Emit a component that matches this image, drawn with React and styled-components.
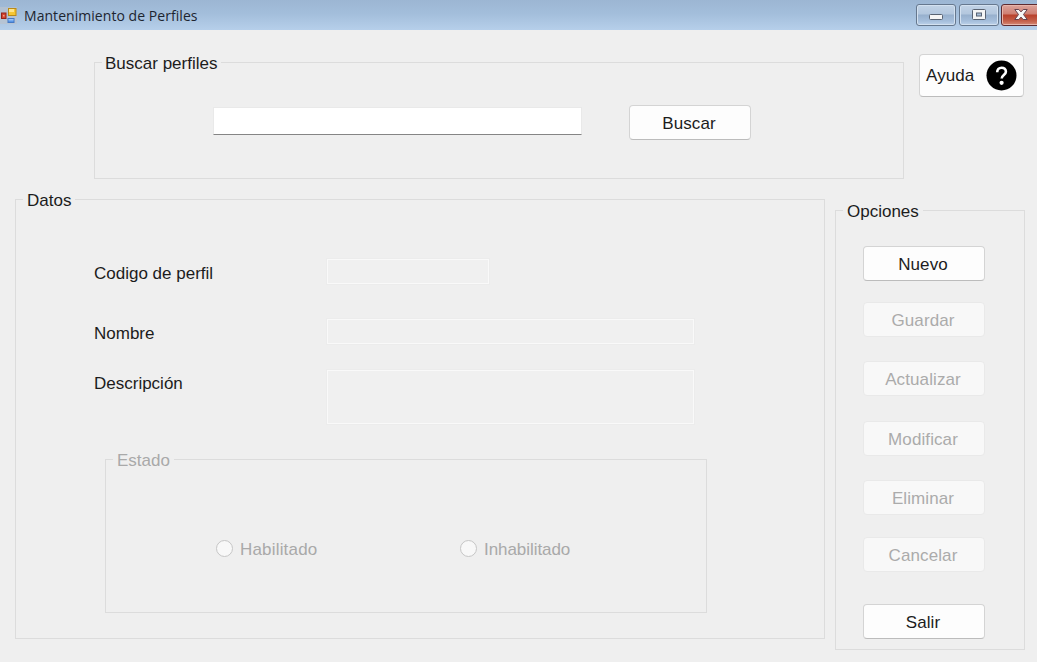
import React from "react";
import styled, { createGlobalStyle } from "styled-components";

const GlobalStyle = createGlobalStyle`
  body { margin: 0; background: #efefef; }
  * { box-sizing: border-box; }
`;

const Window = styled.main`
  width: 1037px;
  height: 662px;
  display: flex;
  flex-direction: column;
  overflow: hidden;
  background: #efefef;
  color: #1c1c1c;
  font: 17px/19px "Liberation Sans", Arial, sans-serif;
`;

const TitleBar = styled.header`
  flex: none;
  height: 30px;
  display: flex;
  align-items: flex-start;
  background: linear-gradient(#9cb6d3, #a3bedb 45%, #b6cfea);
`;

const AppIcon = styled.svg`
  display: block;
  flex: none;
  width: 17px;
  height: 17px;
  margin-top: 7px;
`;

const Title = styled.h1`
  flex: 1;
  margin: 6px 0 0 7px;
  color: #1d2530;
  font: 400 14px/20px "Open Sans", "Noto Sans", sans-serif;
  letter-spacing: 0.05px;
`;

const Controls = styled.div`
  display: flex;
  gap: 2px;
  padding-top: 4px;
  margin-right: -4px;
`;

const ControlButton = styled.button`
  width: 40px;
  height: 22px;
  padding: 0;
  display: flex;
  align-items: center;
  justify-content: center;
  border: 1px solid ${(p) => (p.$close ? "#5e2b30" : "#66788e")};
  border-radius: 3px;
  background: ${(p) =>
    p.$close
      ? "linear-gradient(#dca49b, #cf7f72 45%, #b8402b 50%, #c4604a 80%, #d58a76)"
      : "linear-gradient(#c2d3e6, #b3c7de 45%, #97b0cd 50%, #a5bedb 80%, #bdd2ea)"};
  box-shadow: inset 0 0 0 1px ${(p) => (p.$close ? "#e8b5aa" : "#d3e1f0")};

  &:first-child { margin-right: 1px; }
  svg { display: block; }
`;

const Content = styled.div`
  flex: 1;
  display: flex;
  flex-direction: column;
`;

const SearchRow = styled.div`
  display: flex;
  align-items: flex-start;
  padding: 23px 0 0 94px;
  gap: 15px;
`;

const MainRow = styled.div`
  display: flex;
  align-items: flex-start;
  padding: 11px 0 0 15px;
  gap: 10px;
`;

const Group = styled.fieldset`
  min-width: 0;
  width: ${(p) => p.$width}px;
  height: ${(p) => p.$height}px;
  margin: ${(p) => p.$margin || "0"};
  padding: 0;
  border: 1px solid #dcdcdc;
  color: ${(p) => (p.$muted ? "#a9a9a9" : "inherit")};
`;

const Legend = styled.legend`
  height: 19px;
  margin-left: 7px;
  padding: 0 4px 0 ${(p) => p.$inset || 4}px;
  line-height: 21px;
  white-space: nowrap;
`;

const SearchForm = styled.div`
  display: flex;
  align-items: flex-start;
  padding: 33px 0 0 118px;
  gap: 47px;
`;

const SearchInput = styled.input`
  width: 369px;
  height: 28px;
  margin-top: 2px;
  padding: 2px 6px;
  border: 1px solid #e9e9e9;
  border-bottom: 1px solid #858585;
  background: #fff;
  font: inherit;
  outline: none;
`;

const Button = styled.button`
  width: 122px;
  height: 35px;
  padding: 2px 2px 0 0;
  border: 1px solid #d4d4d4;
  border-bottom-color: #bcbcbc;
  border-radius: 4px;
  background: #fdfdfd;
  color: #1c1c1c;
  font: inherit;
  letter-spacing: 0.1px;

  &:disabled {
    border-color: #e9e9e9;
    background: #f8f8f8;
    color: #ababab;
  }
`;

const HelpButton = styled(Button)`
  width: 105px;
  height: 43px;
  margin-top: 1px;
  padding: 0 6px;
  display: flex;
  align-items: center;
  justify-content: space-between;
`;

const Fields = styled.div`
  display: grid;
  grid-template-columns: 233px 367px;
  grid-template-rows: 60px 51px 54px;
  padding: 50px 0 0 78px;
`;

const Label = styled.label`
  padding-top: ${(p) => (p.$tall ? 4 : 5)}px;
  color: #1c1c1c;
`;

const Field = styled.input`
  width: ${(p) => p.$width}px;
  height: ${(p) => p.$height}px;
  padding: 0;
  border: 1px solid #f9f9f9;
  background: #f0f0f0;
  box-shadow: 0 0 0 1px #ececec;
`;

const Radios = styled.div`
  display: flex;
  padding: 71px 0 0 110px;
`;

const Option = styled.label`
  display: flex;
  align-items: center;
  width: 244px;
  gap: 7px;
  letter-spacing: ${(p) => p.$tracking}px;
`;

const Circle = styled.span`
  width: 17px;
  height: 17px;
  margin-bottom: 2px;
  border: 1px solid #c6c6c6;
  border-radius: 50%;
  background: #f8f8f8;
`;

const Actions = styled.div`
  display: flex;
  flex-direction: column;
  padding: 26px 0 0 27px;
`;

const ActionButton = styled(Button)`
  margin-bottom: ${(p) => p.$after}px;
`;

const actions = [
  { label: "Nuevo", after: 21, enabled: true },
  { label: "Guardar", after: 24 },
  { label: "Actualizar", after: 25 },
  { label: "Modificar", after: 24 },
  { label: "Eliminar", after: 22 },
  { label: "Cancelar", after: 32 },
  { label: "Salir", after: 0, enabled: true },
];

function FormIcon() {
  return (
    <AppIcon viewBox="0 0 17 17">
      <rect width="17" height="17" fill="#b9c3cf" opacity=".75" />
      <rect x="8.500" y="1.500" width="7.500" height="7" fill="#f5c633" stroke="#b98a17" />
      <path d="M9 2h5v3H9z" fill="#ffe48a" />
      <rect x="1.500" y="6" width="4.500" height="5.500" fill="#d3452f" stroke="#96231a" />
      <path d="M3 8h1.500v1.500H3z" fill="#f2a08c" />
      <rect x="8" y="11.500" width="6" height="4" fill="#5a96e6" stroke="#4579c4" />
      <path d="M8.500 12h5v1.500h-5z" fill="#9cc4f7" />
    </AppIcon>
  );
}

function HelpIcon() {
  return (
    <svg width="31" height="31" viewBox="0 0 31 31">
      <circle cx="15.5" cy="15.5" r="15" fill="#000" />
      <path
        d="M11.2 12.3c0-2.900 1.800-4.600 4.400-4.600 2.500 0 4.300 1.600 4.300 4 0 3.200-4.200 3.400-4.200 6.700"
        fill="none"
        stroke="#fff"
        strokeWidth="2.6"
      />
      <circle cx="15.6" cy="22.8" r="2.1" fill="#fff" />
    </svg>
  );
}

export default function App() {
  return (
    <>
      <GlobalStyle />
      <Window>
        <TitleBar>
          <FormIcon />
          <Title>Mantenimiento de Perfiles</Title>
          <Controls>
            <ControlButton aria-label="Minimizar">
              <svg width="14" height="14" viewBox="0 0 14 14">
                <rect x=".5" y="6.500" width="13" height="5" rx="1" fill="#f5f5f5" stroke="#596372" />
              </svg>
            </ControlButton>
            <ControlButton aria-label="Maximizar">
              <svg width="14" height="12" viewBox="0 0 14 12">
                <rect x=".5" y=".5" width="13" height="10" rx="1" fill="#f5f5f5" stroke="#596372" />
                <rect x="4.500" y="4" width="5" height="3" fill="#a9bfd8" stroke="#596372" />
              </svg>
            </ControlButton>
            <ControlButton $close aria-label="Cerrar">
              <svg width="14" height="12" viewBox="0 0 14 12">
                <path
                  d="M.8.500h4L7 2.900 9.200.5h4L9.500 5.500l3.700 5h-4L7 8.100 4.800 10.500h-4L4.500 5.500z"
                  fill="#f7f7f7"
                  stroke="#654450"
                />
              </svg>
            </ControlButton>
          </Controls>
        </TitleBar>
        <Content>
          <SearchRow>
            <Group $width={810} $height={126}>
              <Legend $inset={3}>Buscar perfiles</Legend>
              <SearchForm>
                <SearchInput aria-label="Buscar perfiles" />
                <Button>Buscar</Button>
              </SearchForm>
            </Group>
            <HelpButton>
              Ayuda
              <HelpIcon />
            </HelpButton>
          </SearchRow>
          <MainRow>
            <Group $width={810} $height={449}>
              <Legend>Datos</Legend>
              <Fields>
                <Label htmlFor="codigo">Codigo de perfil</Label>
                <Field id="codigo" $width={162} $height={25} disabled />
                <Label htmlFor="nombre">Nombre</Label>
                <Field id="nombre" $width={367} $height={25} disabled />
                <Label htmlFor="descripcion" $tall>Descripción</Label>
                <Field id="descripcion" $width={367} $height={54} disabled />
              </Fields>
              <Group $width={602} $height={163} $margin="26px 0 0 89px" $muted>
                <Legend>Estado</Legend>
                <Radios>
                  <Option $tracking={0.18}>
                    <Circle />
                    Habilitado
                  </Option>
                  <Option $tracking={-0.06}>
                    <Circle />
                    Inhabilitado
                  </Option>
                </Radios>
              </Group>
            </Group>
            <Group $width={190} $height={449} $margin="11px 0 0">
              <Legend>Opciones</Legend>
              <Actions>
                {actions.map((a) => (
                  <ActionButton key={a.label} $after={a.after} disabled={!a.enabled}>
                    {a.label}
                  </ActionButton>
                ))}
              </Actions>
            </Group>
          </MainRow>
        </Content>
      </Window>
    </>
  );
}
